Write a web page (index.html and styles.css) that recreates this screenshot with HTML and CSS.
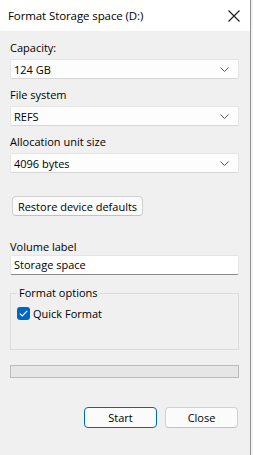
FILE: index.html
```html
<!DOCTYPE html>
<html>
<head>
<meta charset="utf-8">
<link rel="stylesheet" href="styles.css">
</head>
<body>
<div class="window">
  <div class="titlebar">
    <span class="title">Format Storage space (D:)</span>
    <svg class="close-x" width="12" height="12" viewBox="0 0 12 12"><path d="M0.5 0.5 L11.5 11.5 M11.5 0.5 L0.5 11.5" stroke="#1a1a1a" stroke-width="1.1" fill="none"/></svg>
  </div>
  <div class="content">
    <div class="label">Capacity:</div>
    <div class="combo"><span>124 GB</span><svg class="chev" width="9" height="5" viewBox="0 0 9 5"><path d="M0.5 0.5 L4.5 4.5 L8.5 0.5" stroke="#555" stroke-width="1" fill="none"/></svg></div>
    <div class="label gap">File system</div>
    <div class="combo"><span>REFS</span><svg class="chev" width="9" height="5" viewBox="0 0 9 5"><path d="M0.5 0.5 L4.5 4.5 L8.5 0.5" stroke="#555" stroke-width="1" fill="none"/></svg></div>
    <div class="label gap">Allocation unit size</div>
    <div class="combo"><span>4096 bytes</span><svg class="chev" width="9" height="5" viewBox="0 0 9 5"><path d="M0.5 0.5 L4.5 4.5 L8.5 0.5" stroke="#555" stroke-width="1" fill="none"/></svg></div>
    <div class="restore-row"><button class="btn restore">Restore device defaults</button></div>
    <div class="label vol">Volume label</div>
    <div class="textbox">Storage space</div>
    <fieldset class="group">
      <legend>Format options</legend>
      <div class="check-row">
        <span class="checkbox"><svg width="9" height="7" viewBox="0 0 9 7"><path d="M0.8 3.6 L3.3 6 L8.2 0.8" stroke="#fff" stroke-width="1.1" fill="none"/></svg></span>
        <span>Quick Format</span>
      </div>
    </fieldset>
    <div class="progress"></div>
    <div class="actions">
      <button class="btn primary">Start</button>
      <button class="btn">Close</button>
    </div>
  </div>
</div>
</body>
</html>
```
FILE: styles.css
```css
html, body {
  margin: 0;
  padding: 0;
}
body {
  width: 253px;
  height: 455px;
  background: #f3f3f3;
  font-family: "Open Sans", "Noto Sans", sans-serif;
  font-size: 11px;
  color: #000;
  overflow: hidden;
}
.window {
  width: 250px;
  height: 455px;
  background: #f0f0f0;
  border-right: 1px solid #8f8f8f;
  box-sizing: content-box;
}
.titlebar {
  height: 31px;
  background: #ffffff;
  display: flex;
  align-items: center;
  justify-content: space-between;
  padding: 0 10px 0 8px;
}
.title {
  font-size: 11.5px;
  color: #000;
  letter-spacing: -0.1px;
}
.close-x {
  display: block;
  margin-top: 1px;
}
.content {
  padding: 9px 11px 0 10px;
  display: flex;
  flex-direction: column;
}
.label {
  height: 16px;
  line-height: 16px;
  margin-bottom: 3px;
}
.label.gap {
  margin-top: 8px;
}
.combo {
  height: 20px;
  box-sizing: border-box;
  background: #fdfdfd;
  border: 1px solid #e5e5e5;
  border-bottom-color: #d6d6d6;
  border-radius: 2px;
  display: flex;
  align-items: center;
  justify-content: space-between;
  padding: 0 9px 0 3px;
}
.chev {
  display: block;
}
.restore-row {
  margin-top: 23px;
  padding-left: 2px;
  display: flex;
}
.btn {
  font-family: inherit;
  font-size: 11px;
  color: #000;
  background: #fbfbfb;
  border: 1px solid #d0d0d0;
  border-bottom-color: #c2c2c2;
  border-radius: 4px;
  height: 21px;
  padding: 0;
  box-sizing: border-box;
}
.restore {
  width: 131px;
  height: 20px;
}
.label.vol {
  margin-top: 23px;
  margin-bottom: 0;
}
.textbox {
  height: 20px;
  box-sizing: border-box;
  background: #ffffff;
  border: 1px solid #e5e5e5;
  border-bottom-color: #8a8a8a;
  border-radius: 2px;
  padding: 0 3px;
  line-height: 18px;
}
.group {
  margin: 11px 0 0 0;
  padding: 6px 6px 0 6px;
  height: 64px;
  box-sizing: border-box;
  border: 1px solid #dcdcdc;
  min-width: 0;
}
.group legend {
  padding: 0 2px;
  margin-left: 0;
  line-height: 14px;
}
.check-row {
  display: flex;
  align-items: center;
  gap: 3px;
}
.checkbox {
  width: 13px;
  height: 13px;
  border-radius: 3px;
  background: #0067c0;
  display: flex;
  align-items: center;
  justify-content: center;
}
.checkbox svg {
  display: block;
}
.progress {
  margin-top: 15px;
  height: 13px;
  box-sizing: border-box;
  background: #e6e6e6;
  border: 1px solid #bcbcbc;
}
.actions {
  margin-top: 29px;
  display: flex;
  justify-content: flex-end;
  gap: 8px;
  padding-right: 1px;
}
.actions .btn {
  width: 73px;
}
.btn.primary {
  border: 1px solid #0067c0;
}
```
